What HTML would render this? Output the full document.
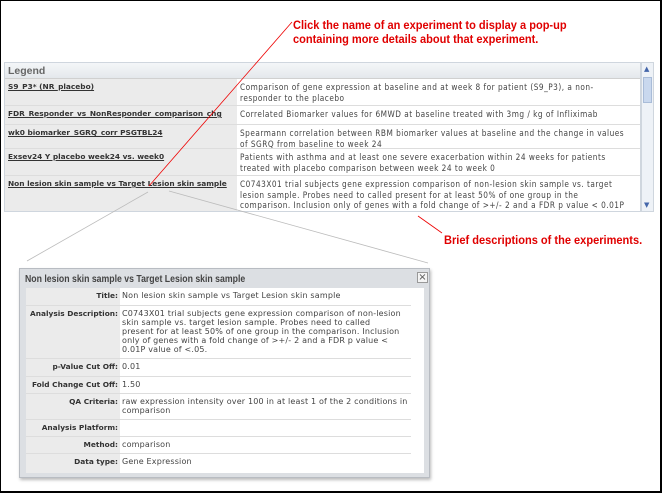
<!DOCTYPE html>
<html><head><style>
*{margin:0;padding:0;box-sizing:border-box}
body{width:662px;height:493px;background:#fff;position:relative;overflow:hidden;font-family:"DejaVu Sans","Liberation Sans",sans-serif;font-size:7.4px;color:#333}
#frame{position:absolute;left:0;top:0;width:662px;height:493px;border:1px solid #000;border-right-width:2px;border-bottom-width:2px;z-index:5}
.red{position:absolute;color:#e00000;font-family:"Liberation Sans",sans-serif;font-weight:bold;font-size:12px;line-height:14px;white-space:nowrap;transform-origin:0 0;transform:scaleX(0.92)}
.abs{position:absolute}
#legend{left:4px;top:62px;width:637px;height:150px;border:1px solid #cfd6de;overflow:hidden}
#lh{height:16px;background:linear-gradient(#f4f6f8,#e4e8ec);font-family:"Liberation Sans",sans-serif;font-weight:bold;font-size:10.5px;color:#666;padding:2px 3px;border-bottom:1px solid #d0d0d0}
.row{position:absolute;left:0;width:635px;border-bottom:1px solid #ddd}
.row .l{position:absolute;left:0;top:0;bottom:0;width:232px;background:#ebebeb;padding:3px 3px;font-weight:bold;text-decoration:underline;color:#333;white-space:nowrap;overflow:hidden}
.row .r{position:absolute;left:235px;top:3px;line-height:10.5px;white-space:nowrap;font-size:8.4px;letter-spacing:0.55px;color:#444;transform-origin:0 0;transform:scaleX(0.88)}
#sb{left:641px;top:62px;width:13px;height:150px;background:#eef2f7;border:1px solid #cfd6de}
#pop{left:19px;top:268px;width:411px;height:210px;background:#dcdfe3;border:1px solid #b8bcc2;box-shadow:1px 2px 3px #bbb}
#pt{left:5px;top:4px;font-family:"Liberation Sans",sans-serif;font-weight:bold;font-size:10.5px;color:#444;white-space:nowrap;transform-origin:0 0;transform:scaleX(0.83)}
#px{left:397px;top:3px;width:11px;height:11px;border:1px solid #999;background:#f4f4f4;font-size:10px;line-height:9px;text-align:center;color:#555}
#tb{left:6px;top:19px;width:385px;height:185px;background:#fff}
#tb2{left:391px;top:19px;width:13px;height:185px;background:#fff}
.pr{position:absolute;left:0;width:385px;border-bottom:1px solid #ddd}
.pr .k{position:absolute;left:0;top:0;bottom:0;width:94px;background:#ebebeb;text-align:right;padding:3px 2px;font-weight:bold}
.pr .v{position:absolute;left:96px;top:3px;line-height:9px;white-space:nowrap;font-size:8px;letter-spacing:0.18px;color:#444}
svg{z-index:4}
</style></head><body>
<div id="frame"></div>
<div class="red" style="left:293px;top:18px">Click the name of an experiment to display a pop-up<br>containing more details about that experiment.</div>
<div class="red" style="left:444px;top:233px">Brief descriptions of the experiments.</div>
<div id="legend" class="abs">
<div id="lh">Legend</div>
<div class="row" style="top:16px;height:27px"><div class="l">S9_P3* (NR_placebo)</div><div class="r">Comparison of gene expression at baseline and at week 8 for patient (S9_P3), a non-<br>responder to the placebo</div></div>
<div class="row" style="top:43px;height:19px"><div class="l">FDR_Responder_vs_NonResponder_comparison_chg</div><div class="r">Correlated Biomarker values for 6MWD at baseline treated with 3mg / kg of Infliximab</div></div>
<div class="row" style="top:62px;height:24px"><div class="l">wk0 biomarker_SGRQ_corr PSGTBL24</div><div class="r">Spearmann correlation between RBM biomarker values at baseline and the change in values<br>of SGRQ from baseline to week 24</div></div>
<div class="row" style="top:86px;height:27px"><div class="l">Exsev24 Y placebo week24 vs. week0</div><div class="r">Patients with asthma and at least one severe exacerbation within 24 weeks for patients<br>treated with placebo comparison between week 24 to week 0</div></div>
<div class="row" style="top:113px;height:40px;border:0"><div class="l">Non lesion skin sample vs Target Lesion skin sample</div><div class="r">C0743X01 trial subjects gene expression comparison of non-lesion skin sample vs. target<br>lesion sample. Probes need to called present for at least 50% of one group in the<br>comparison. Inclusion only of genes with a fold change of &gt;+/- 2 and a FDR p value &lt; 0.01P<br>value of &lt;.05</div></div>
</div>
<div id="sb" class="abs"><div class="abs" style="left:1px;top:14px;width:9px;height:26px;background:#c9d8ee;border:1px solid #a9bcd8"></div><div class="abs" style="left:2px;top:2px;font-size:7px;color:#4466aa">&#9650;</div><div class="abs" style="left:2px;top:138px;font-size:7px;color:#4466aa">&#9660;</div></div>
<div id="pop" class="abs">
<div id="pt" class="abs">Non lesion skin sample vs Target Lesion skin sample</div>
<div id="px" class="abs">×</div>
<div id="tb" class="abs">
<div class="pr" style="top:0;height:18px"><div class="k">Title:</div><div class="v">Non lesion skin sample vs Target Lesion skin sample</div></div>
<div class="pr" style="top:18px;height:53px"><div class="k">Analysis Description:</div><div class="v">C0743X01 trial subjects gene expression comparison of non-lesion<br>skin sample vs. target lesion sample. Probes need to called<br>present for at least 50% of one group in the comparison. Inclusion<br>only of genes with a fold change of &gt;+/- 2 and a FDR p value &lt;<br>0.01P value of &lt;.05.</div></div>
<div class="pr" style="top:71px;height:18px"><div class="k">p-Value Cut Off:</div><div class="v">0.01</div></div>
<div class="pr" style="top:89px;height:17px"><div class="k">Fold Change Cut Off:</div><div class="v">1.50</div></div>
<div class="pr" style="top:106px;height:26px"><div class="k">QA Criteria:</div><div class="v">raw expression intensity over 100 in at least 1 of the 2 conditions in<br>comparison</div></div>
<div class="pr" style="top:132px;height:17px"><div class="k">Analysis Platform:</div><div class="v"></div></div>
<div class="pr" style="top:149px;height:17px"><div class="k">Method:</div><div class="v">comparison</div></div>
<div class="pr" style="top:166px;height:19px;border:0"><div class="k">Data type:</div><div class="v">Gene Expression</div></div>
</div>
<div id="tb2" class="abs"></div>
</div>
<svg class="abs" style="left:0;top:0" width="662" height="493">
<line x1="292" y1="22" x2="149" y2="186" stroke="#e00" stroke-width="0.8"/>
<line x1="148" y1="192" x2="27" y2="261" stroke="#bbb" stroke-width="0.8"/>
<line x1="169" y1="191" x2="428" y2="263" stroke="#bbb" stroke-width="0.8"/>
<line x1="418" y1="216" x2="442" y2="233" stroke="#e00" stroke-width="0.8"/>
</svg>
</body></html>
